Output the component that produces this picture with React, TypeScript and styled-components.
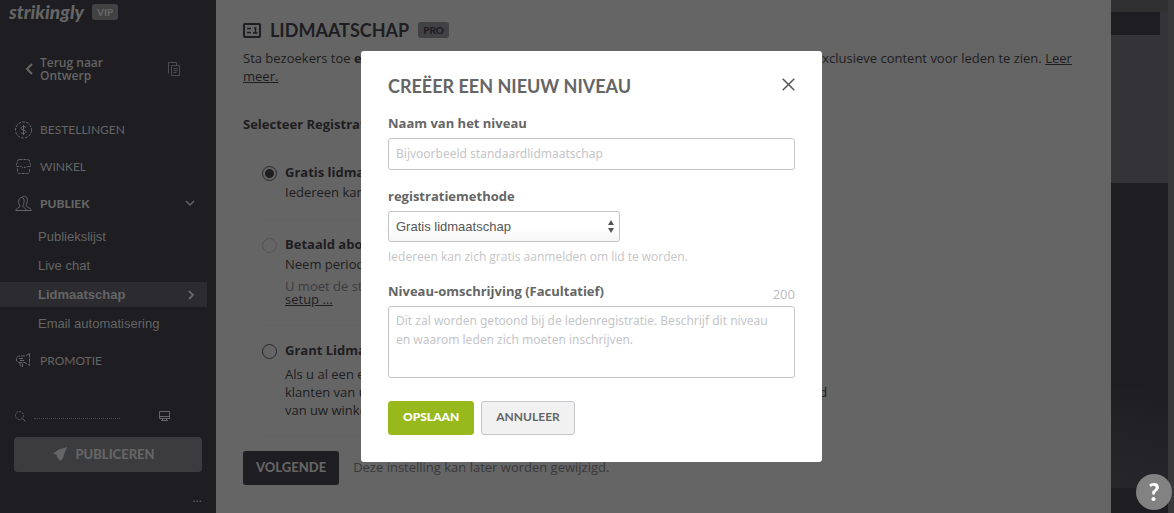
import React from "react";
import styled, { createGlobalStyle, css } from "styled-components";

const ink = "#1e1d21";
const grey = "#656565";
const mid = "#424143";
const pale = "#c5c5c9";
const brandFont = `Lato, "Liberation Sans", sans-serif`;
const bodyFont = `"Open Sans", "Liberation Sans", sans-serif`;

const GlobalStyle = createGlobalStyle`
  *, *::before, *::after { box-sizing: border-box; }
  body { margin: 0; background: ${grey}; font-family: ${bodyFont}; font-size: 13px; color: ${ink}; }
  button, input, select, textarea { font: inherit; }
  h1, h2, p, ul { margin: 0; padding: 0; }
  ul { list-style: none; }
`;

const Page = styled.div`
  display: flex;
  min-height: 100vh;
`;

/* ---------- Sidebar ---------- */
const Sidebar = styled.aside`
  display: flex;
  flex-direction: column;
  flex: 0 0 216px;
  background: ${ink};
  color: ${grey};
`;

const Brand = styled.div`
  display: flex;
  align-items: center;
  gap: 8px;
  height: 24px;
  padding-left: 9px;
`;

const Logo = styled.span`
  font: italic 900 19px/20px ${brandFont};
`;

const Badge = styled.span<{ $dark?: boolean }>`
  display: inline-flex;
  align-items: center;
  justify-content: center;
  height: 16px;
  padding: 0 5px;
  border-radius: 3px;
  background: ${mid};
  color: ${(p) => (p.$dark ? ink : grey)};
  font: 900 10px/16px ${brandFont};
`;

const BackRow = styled.div`
  display: flex;
  align-items: center;
  justify-content: space-between;
  margin: 32px 36px 29px 25px;
`;

const BackLink = styled.a`
  display: flex;
  align-items: center;
  gap: 7px;
  width: 110px;
  color: inherit;
  text-decoration: none;
  font-weight: 600;
  font-size: 12px;
  line-height: 13px;
`;

const NavLink = styled.a<{ $bold?: boolean }>`
  display: flex;
  align-items: center;
  gap: 8px;
  height: 37px;
  padding: 0 21px 0 15px;
  color: inherit;
  text-decoration: none;
  font: ${(p) => (p.$bold ? 900 : 400)} 12px/18px ${brandFont};
  svg { flex: none; }
  svg:last-child:not(:first-child) { margin-left: auto; }
`;

const SubList = styled.ul`
  padding-bottom: 4px;
  li { padding: 2px 9px 2px 0; }
`;

const SubLink = styled.a<{ $active?: boolean }>`
  display: flex;
  align-items: center;
  justify-content: space-between;
  height: 25px;
  padding: 0 12px 0 38px;
  color: inherit;
  text-decoration: none;
  font: 13px/18px "Liberation Sans", Arial, sans-serif;
  ${(p) =>
    p.$active &&
    css`
      background: #2c2b2f;
      font-weight: 700;
    `}
`;

const Tools = styled.div`
  display: flex;
  align-items: center;
  gap: 8px;
  height: 16px;
  margin: 29px 45px 13px 15px;
`;

const FaintLine = styled.span`
  flex: 1;
  margin: 4px 30px 0 0;
  border-bottom: 1px dotted #4a494c;
`;

const Publish = styled.button`
  display: flex;
  align-items: center;
  justify-content: center;
  gap: 8px;
  height: 35px;
  margin: 0 14px;
  padding: 0 8px 2px 0;
  border: 0;
  border-radius: 4px;
  background: #3c3b3e;
  color: ${grey};
  font: 900 13px/18px ${brandFont};
`;

const More = styled.button`
  align-self: flex-end;
  margin: 17px 14px 0 0;
  padding: 0;
  border: 0;
  background: none;
  color: ${grey};
  font-size: 12px;
  line-height: 18px;
`;

/* ---------- Main ---------- */
const Main = styled.main`
  flex: 1;
  min-width: 0;
  padding: 18px 27px 28px;
  line-height: 18px;
`;

const TitleRow = styled.div`
  display: flex;
  align-items: center;
  gap: 9px;
  height: 24px;
`;

const Title = styled.h1`
  font: 700 18px/24px ${brandFont};
`;

const Intro = styled.p`
  margin: 7px 0 30px;
  a { color: inherit; }
`;

const Legend = styled.p`
  font-weight: 700;
`;

const Options = styled.div`
  margin: 15px 258px 14px 19px;
`;

const Option = styled.div`
  display: flex;
  gap: 8px;
  padding: 15px 0 17px;
  border-bottom: 1px solid #626262;
`;

const Radio = styled.input<{ $faint?: boolean }>`
  appearance: none;
  flex: none;
  width: 15px;
  height: 15px;
  margin: 3px 0 0;
  border: 1px solid ${(p) => (p.$faint ? "#535355" : "#29282c")};
  border-radius: 50%;
  &:checked { background: radial-gradient(circle, ${ink} 4px, transparent 5px); }
`;

const OptionBody = styled.div`
  flex: 1;
  min-width: 0;
  white-space: nowrap;
`;

const OptionTitle = styled.label`
  display: block;
  font-weight: 700;
`;

const OptionText = styled.p<{ $long?: boolean }>`
  line-height: ${(p) => (p.$long ? 18 : 20)}px;
  margin-top: ${(p) => (p.$long ? 6 : 1)}px;
`;

const OptionNote = styled.p`
  margin: 6px 0 2px;
  color: #3c3c3e;
  line-height: 13px;
  a { color: ${ink}; }
`;

const NextRow = styled.div`
  display: flex;
  align-items: center;
  gap: 14px;
  color: #39393b;
  span { padding-bottom: 2px; }
`;

const Next = styled.button`
  height: 34px;
  padding: 0 13px 2px;
  border: 0;
  border-radius: 3px;
  background: ${ink};
  color: ${grey};
  font: 900 13px/18px ${brandFont};
`;

/* ---------- Site preview at the right edge ---------- */
const Preview = styled.aside`
  display: flex;
  flex: 0 0 63px;
  background: ${ink};
`;

const PreviewBody = styled.div`
  flex: 1;
`;

const PreviewBlock = styled.div<{ $h: number; $tone: string; $inset?: number }>`
  height: ${(p) => p.$h}px;
  background: ${(p) => p.$tone};
  border-right: ${(p) => p.$inset ?? 0}px solid #343337;
`;

const PreviewTrack = styled.div`
  width: 6px;
  background: #38373a;
`;

const PreviewShade = styled.div`
  height: 100px;
  margin-top: 205px;
  background: linear-gradient(15deg, #27262a, ${ink});
`;

const Help = styled.button`
  position: fixed;
  right: 2px;
  bottom: 3px;
  width: 36px;
  height: 36px;
  padding: 0;
  border: 0;
  border-radius: 50%;
  background: #828283;
  color: #fff;
  font: 900 24px/36px ${brandFont};
`;

/* ---------- Dialog ---------- */
const Overlay = styled.div`
  position: fixed;
  inset: 0;
  display: flex;
  align-items: center;
  justify-content: center;
  padding-left: 9px;
`;

const Dialog = styled.form`
  width: 461px;
  max-width: 100%;
  padding: 23px 27px 27px;
  border-radius: 3px;
  background: #fff;
  color: ${grey};
`;

const DialogHead = styled.div`
  display: flex;
  justify-content: space-between;
  margin-bottom: 16px;
`;

const DialogTitle = styled.h2`
  font: 700 18px/24px ${brandFont};
`;

const Close = styled.button`
  display: flex;
  height: 18px;
  padding: 4px 0 0;
  border: 0;
  background: none;
  color: #555;
`;

const Field = styled.div`
  display: flex;
  flex-direction: column;
  gap: 6px;
  margin-bottom: 17px;
`;

const FieldHead = styled.div`
  display: flex;
  justify-content: space-between;
  line-height: 18px;
`;

const Label = styled.label`
  font-weight: 700;
  line-height: 18px;
`;

const Counter = styled.span`
  padding-top: 3px;
  height: 18px;
  color: #bbbbc0;
`;

const control = css`
  width: 100%;
  border: 1px solid ${pale};
  border-radius: 3px;
  background: #fff;
  color: ${grey};
  outline: 0;
  &::placeholder { color: ${pale}; opacity: 1; }
`;

const textControl = css`
  ${control}
  font: 12px/19px "Noto Sans", ${bodyFont};
`;

const Input = styled.input`
  ${textControl}
  height: 32px;
  padding: 0 7px 2px;
`;

const TextArea = styled.textarea`
  ${textControl}
  display: block;
  height: 72px;
  padding: 4px 16px 4px 7px;
  resize: none;
`;

const SelectWrap = styled.div`
  position: relative;
  width: 232px;
  svg {
    position: absolute;
    top: 9px;
    right: 6px;
    pointer-events: none;
  }
`;

const Select = styled.select`
  ${control}
  appearance: none;
  display: block;
  height: 31px;
  padding: 0 7px;
  background: linear-gradient(#fff 50%, #f6f6f7);
  font-family: "Liberation Sans", Arial, sans-serif;
  color: #555;
`;

const Hint = styled.p`
  color: ${pale};
  font-size: 12px;
  line-height: 17px;
`;

const Actions = styled.div`
  display: flex;
  gap: 7px;
  margin-top: 23px;
`;

const Action = styled.button<{ $primary?: boolean }>`
  height: 34px;
  padding: 0 14px 2px;
  border: 1px solid ${(p) => (p.$primary ? "#98b91b" : pale)};
  border-radius: 3px;
  background: ${(p) => (p.$primary ? "#98b91b" : "#f1f1f2")};
  color: ${(p) => (p.$primary ? "#fff" : grey)};
  font: ${(p) => (p.$primary ? 900 : 700)} 12px/18px ${brandFont};
`;

/* ---------- Icons ---------- */
const Icon = ({ w, h, children, sw = 1 }: { w: number; h: number; sw?: number; children: React.ReactNode }) => (
  <svg width={w} height={h} viewBox={`0 0 ${w} ${h}`} fill="none" stroke="currentColor" strokeWidth={sw} aria-hidden="true">
    {children}
  </svg>
);

const ChevronLeft = () => <Icon w={8} h={12} sw={2}><path d="M7 1 2 6l5 5" /></Icon>;
const ChevronRight = () => <Icon w={8} h={10} sw={2}><path d="m2 1 4 4-4 4" /></Icon>;
const ChevronDown = () => <Icon w={10} h={7} sw={1.5}><path d="m1 1 4 4 4-4" /></Icon>;
const Pages = () => (
  <Icon w={12} h={14}><g opacity=".65"><path d="M3.5 3.5h8v10h-8zM.5 11.5V.5h8v3M5.5 6.5h4M5.5 8.5h4M5.5 10.5h3" /></g></Icon>
);
const Coin = () => (
  <Icon w={17} h={18}>
    <circle cx="8.5" cy="9" r="8" strokeDasharray="3 1" />
    <path d="M11 6.5C10.500 5.700 9.700 5.500 8.500 5.500 7 5.500 6 6.200 6 7.200 6 9.500 11 8.500 11 10.800 11 12 10 12.500 8.500 12.500 7.200 12.500 6.300 12.200 5.800 11.300M8.500 4v10" />
  </Icon>
);
const Shop = () => (
  <Icon w={17} h={16}>
    <path d="M4.500.500h8q2 0 2 2l1 3v2h-4l-1 1h-3l-1-1h-5v-2l1-3q0-2 2-2M2.500 9.500v3q0 2 2 2h8q2 0 2-2v-3" strokeDasharray="3 1" />
  </Icon>
);
const People = () => (
  <Icon w={17} h={17}>
    <path d="M.6 15.500c.4-2.500 4.400-2.500 4.400-4.500C3 8.500 3 3 6.500 2.500 7.500 1 12 0 12.300 4.500c.2 3-.8 4.500-1.300 6 0 2 5 2 5.400 5zM6.500 2.500C9 2.500 9.500 5 9 7.500c-.4 2-1 2.500-1 4 .2 1 3 1.500 3.500 4" />
  </Icon>
);
const Megaphone = () => (
  <Icon w={17} h={15}><path d="M14.500.500v12L10 9.500H3.500L1.500 8V4.500L3.500 3H10zM4.500 10l2 4 1.500-1-1-3M4 5.500h5M5 7.500h4" strokeDasharray="4 1" /></Icon>
);
const Search = () => <Icon w={11} h={11}><circle cx="4.5" cy="4.5" r="4" strokeDasharray="2 1" /><path d="m7.500 7.500 3 3" /></Icon>;
const Monitor = () => <Icon w={13} h={11}><path d="M1.500.500h10v7h-10zM1.500 5.500h10M3 9.500h7M4.500 8v2M8.500 8v2" /></Icon>;
const Plane = () => (
  <svg width="14" height="14" viewBox="0 0 14 14" fill="currentColor" aria-hidden="true"><path d="M14 0 6 2.500 0 6.500 4 8v2l3 4 3-2.500 1-4z" /></svg>
);
const Card = () => (
  <Icon w={18} h={15} sw={2}><rect x="1" y="1" width="16" height="13" rx="1" /><path d="M4 5.500h4M4 9.500h4" strokeWidth="1.5" /><path d="M11 5h1.500v5M10 10h4.500" strokeWidth="1.5" /></Icon>
);
const Cross = () => <Icon w={13} h={13} sw={1.5}><path d="m.7.7 11.600 11.600M12.300.7.7 12.300" /></Icon>;
const UpDown = () => (
  <svg width="6" height="13" viewBox="0 0 6 13" fill="#555" aria-hidden="true"><path d="M3 0 6 5H0zM3 13 0 8h6z" /></svg>
);

export default function App() {
  return (
    <>
      <GlobalStyle />
      <Page>
        <Sidebar>
          <Brand><Logo>strikingly</Logo><Badge>VIP</Badge></Brand>
          <BackRow>
            <BackLink href="#ontwerp"><ChevronLeft /><span>Terug naar<br />Ontwerp</span></BackLink>
            <Pages />
          </BackRow>
          <nav>
            <NavLink href="#bestellingen"><Coin />BESTELLINGEN</NavLink>
            <NavLink href="#winkel"><Shop />WINKEL</NavLink>
            <NavLink href="#publiek" $bold><People />PUBLIEK<ChevronDown /></NavLink>
            <SubList>
              <li><SubLink href="#lijst">Publiekslijst</SubLink></li>
              <li><SubLink href="#chat">Live chat</SubLink></li>
              <li><SubLink href="#lidmaatschap" $active>Lidmaatschap<ChevronRight /></SubLink></li>
              <li><SubLink href="#email">Email automatisering</SubLink></li>
            </SubList>
            <NavLink href="#promotie"><Megaphone />PROMOTIE</NavLink>
          </nav>
          <Tools><Search /><FaintLine /><Monitor /></Tools>
          <Publish type="button"><Plane />PUBLICEREN</Publish>
          <More type="button" aria-label="Meer">...</More>
        </Sidebar>

        <Main>
          <TitleRow><Card /><Title>LIDMAATSCHAP</Title><Badge $dark>PRO</Badge></TitleRow>
          <Intro>
            Sta bezoekers toe <b>een account aan te maken</b> en lid te worden om snel toegang te krijgen tot exclusieve content voor leden te zien.{" "}
            <a href="#meer">Leer meer.</a>
          </Intro>
          <Legend>Selecteer Registratiemethode</Legend>
          <Options>
            <Option>
              <Radio type="radio" name="methode" id="gratis" defaultChecked />
              <OptionBody>
                <OptionTitle htmlFor="gratis">Gratis lidmaatschap</OptionTitle>
                <OptionText>Iedereen kan zich gratis aanmelden om lid te worden.</OptionText>
              </OptionBody>
            </Option>
            <Option>
              <Radio type="radio" name="methode" id="betaald" $faint />
              <OptionBody>
                <OptionTitle htmlFor="betaald">Betaald abonnement</OptionTitle>
                <OptionText>Neem periodieke betalingen van uw leden aan.</OptionText>
                <OptionNote>U moet de stripe-betalingen eerst instellen.<br /><a href="#setup">setup ...</a></OptionNote>
              </OptionBody>
            </Option>
            <Option>
              <Radio type="radio" name="methode" id="grant" />
              <OptionBody>
                <OptionTitle htmlFor="grant">Grant Lidmaatschap</OptionTitle>
                <OptionText $long>
                  Als u al een eigen lijst met leden heeft, kunt u hen toegang geven. Ook<br />
                  klanten van uw winkel mogen straks ook handmatig als nieuwe leden worden toegevoegd<br />
                  van uw winkel.
                </OptionText>
              </OptionBody>
            </Option>
          </Options>
          <NextRow><Next type="button">VOLGENDE</Next><span>Deze instelling kan later worden gewijzigd.</span></NextRow>
        </Main>

        <Preview>
          <PreviewBody>
            <PreviewBlock $h={12} $tone="#303033" />
            <PreviewBlock $h={23} $tone={ink} $inset={8} />
            <PreviewBlock $h={148} $tone="#343337" />
            <PreviewShade />
          </PreviewBody>
          <PreviewTrack />
        </Preview>
      </Page>

      <Overlay>
        <Dialog role="dialog" aria-modal="true" aria-labelledby="dialog-title" onSubmit={(e) => e.preventDefault()}>
          <DialogHead>
            <DialogTitle id="dialog-title">CREËER EEN NIEUW NIVEAU</DialogTitle>
            <Close type="button" aria-label="Sluiten"><Cross /></Close>
          </DialogHead>
          <Field>
            <Label htmlFor="naam">Naam van het niveau</Label>
            <Input id="naam" placeholder="Bijvoorbeeld standaardlidmaatschap" />
          </Field>
          <Field>
            <Label htmlFor="registratie">registratiemethode</Label>
            <SelectWrap>
              <Select id="registratie"><option>Gratis lidmaatschap</option></Select>
              <UpDown />
            </SelectWrap>
            <Hint>Iedereen kan zich gratis aanmelden om lid te worden.</Hint>
          </Field>
          <Field>
            <FieldHead><Label htmlFor="omschrijving">Niveau-omschrijving (Facultatief)</Label><Counter>200</Counter></FieldHead>
            <TextArea id="omschrijving" placeholder="Dit zal worden getoond bij de ledenregistratie. Beschrijf dit niveau en waarom leden zich moeten inschrijven." />
          </Field>
          <Actions><Action type="submit" $primary>OPSLAAN</Action><Action type="button">ANNULEER</Action></Actions>
        </Dialog>
      </Overlay>
      <Help type="button" aria-label="Help">?</Help>
    </>
  );
}
